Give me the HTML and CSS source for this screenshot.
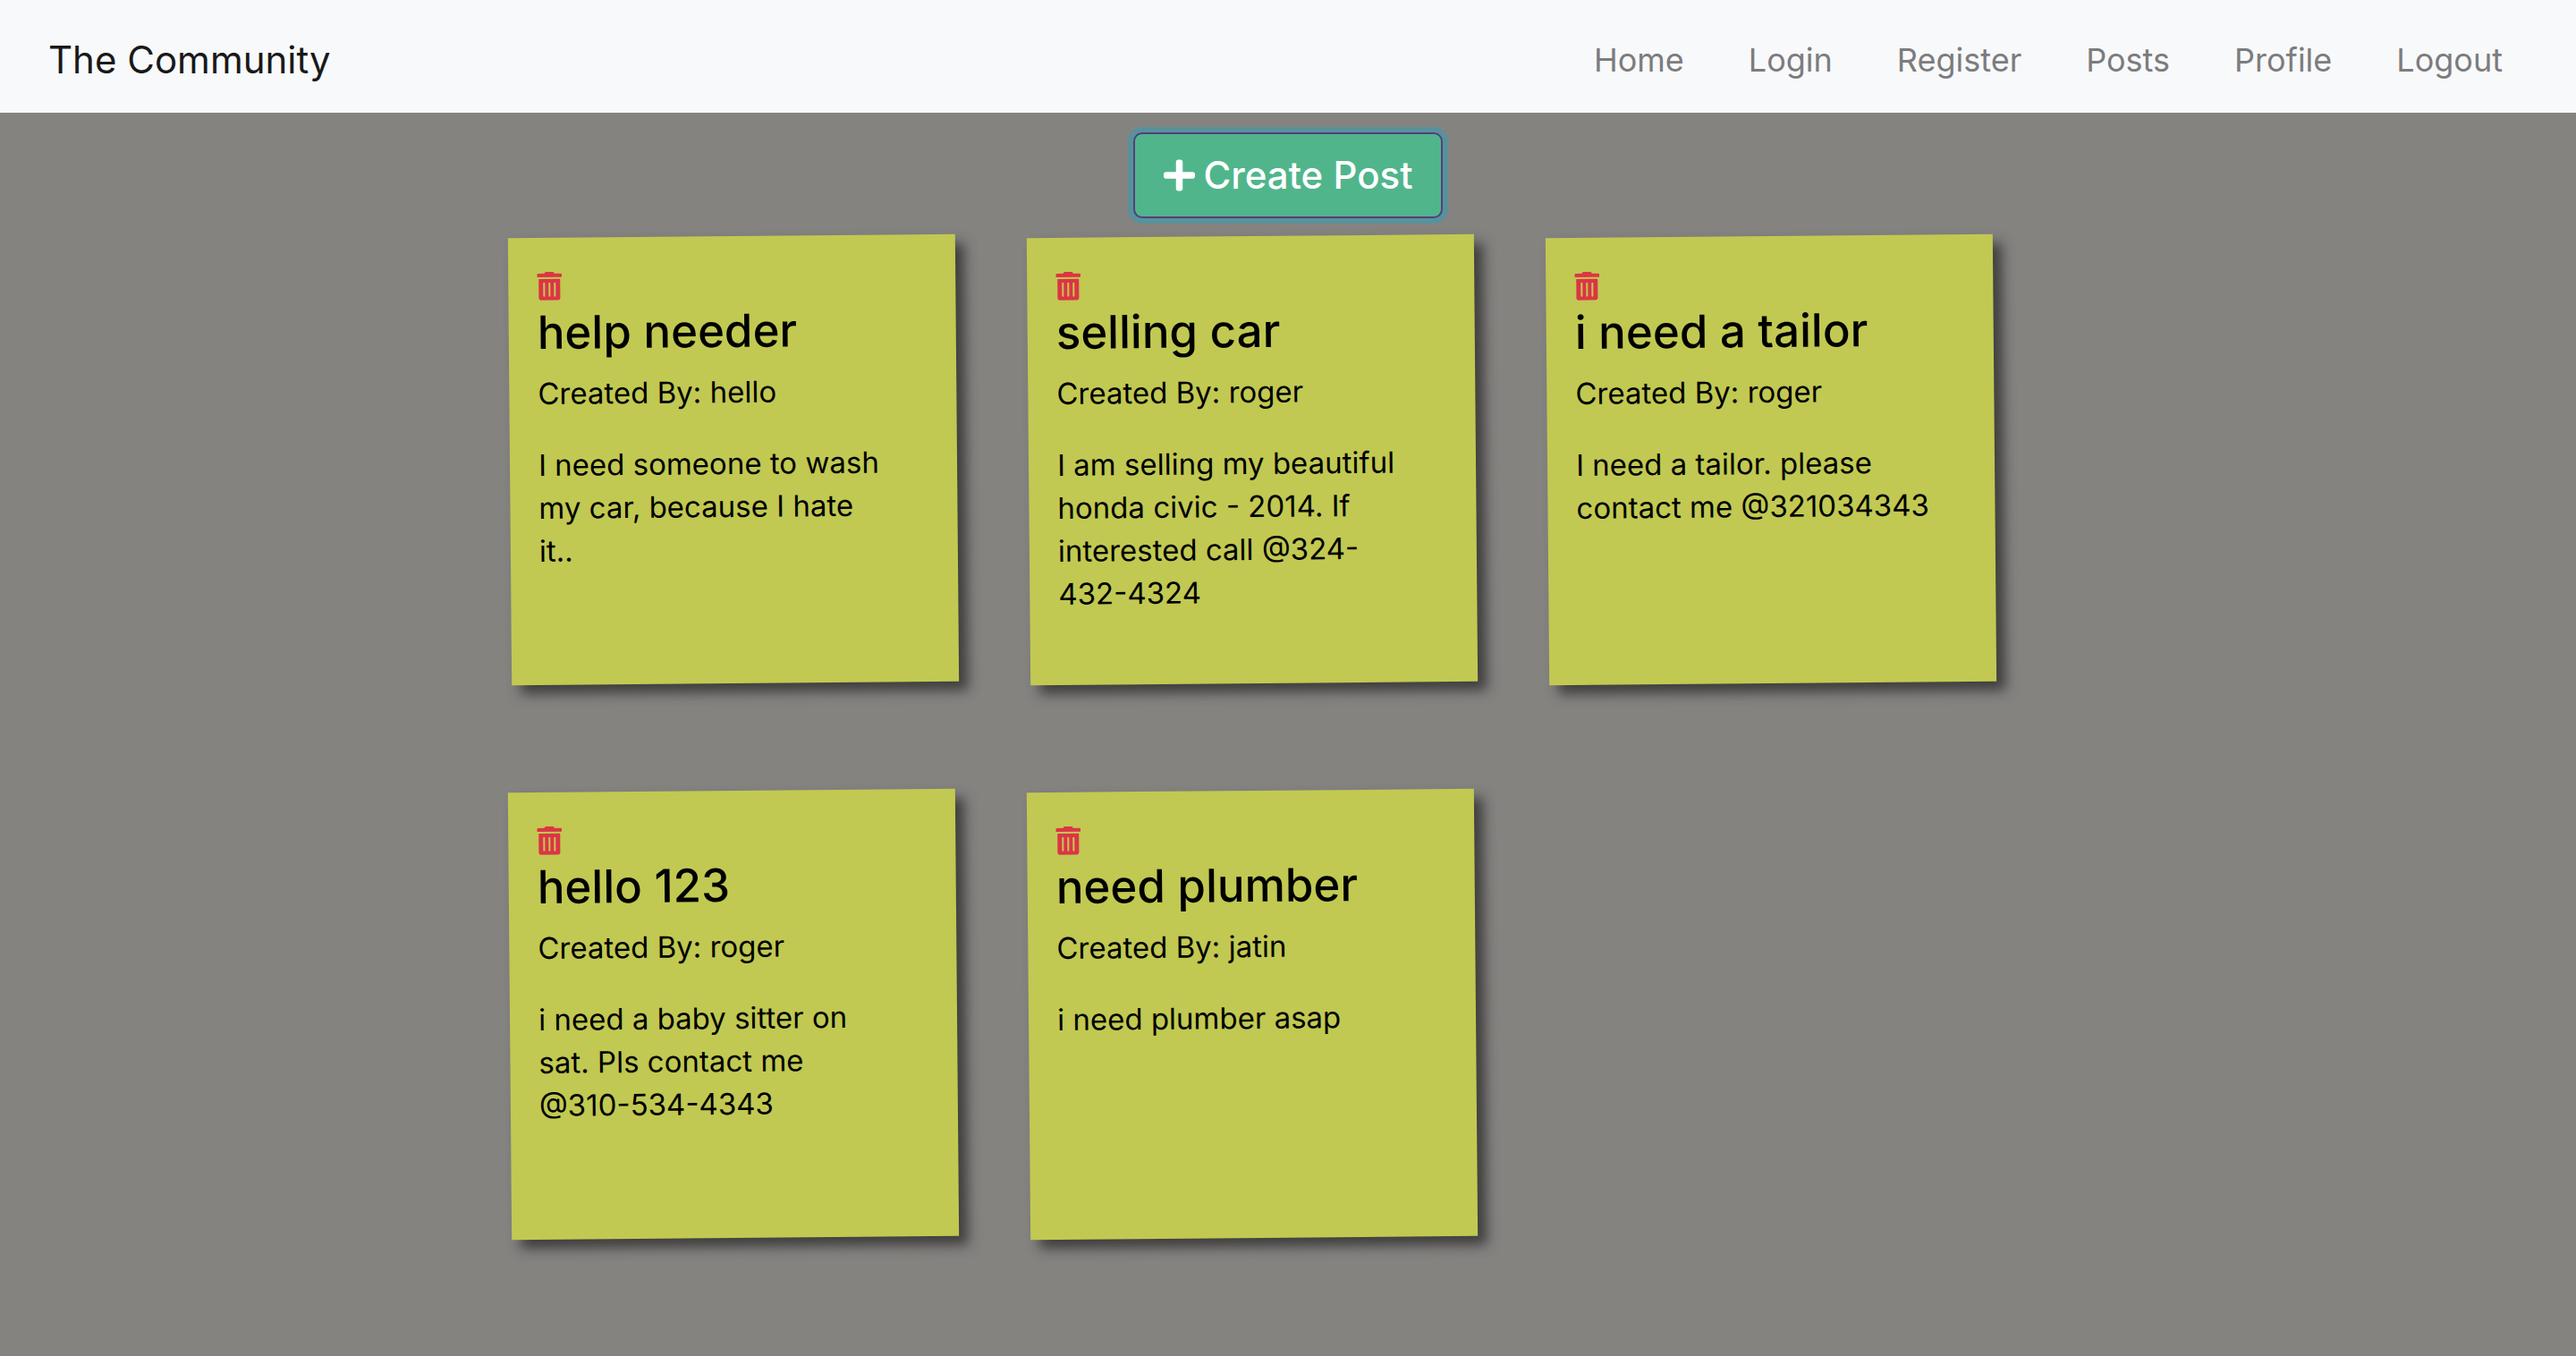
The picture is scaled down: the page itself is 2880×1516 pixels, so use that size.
FILE: index.html
```html
<!DOCTYPE html>
<html lang="en">
<head>
  <meta charset="utf-8">
  <meta name="viewport" content="width=device-width, initial-scale=1">
  <title>The Community</title>
  <link rel="stylesheet" href="styles.css">
</head>
<body>
  <svg class="sprite" aria-hidden="true">
    <symbol id="trash" viewBox="0 0 448 512">
      <path fill-rule="evenodd" d="M0 84V56c0-13.300 10.700-24 24-24h112l9.400-18.700c4-8.200 12.300-13.300 21.400-13.300h114.300c9.100 0 17.400 5.100 21.500 13.300L312 32h112c13.300 0 24 10.700 24 24v28c0 6.600-5.400 12-12 12H12C5.400 96 0 90.600 0 84zM416 140v324c0 26.500-21.500 48-48 48H80c-26.500 0-48-21.500-48-48V140c0-6.600 5.400-12 12-12h360c6.600 0 12 5.400 12 12zM144 208a16 16 0 0 0-32 0v224a16 16 0 0 0 32 0zM240 208a16 16 0 0 0-32 0v224a16 16 0 0 0 32 0zM336 208a16 16 0 0 0-32 0v224a16 16 0 0 0 32 0z"/>
    </symbol>
  </svg>

  <header class="navbar">
    <a class="brand" href="#">The Community</a>
    <nav class="nav-links">
      <a href="#">Home</a>
      <a href="#">Login</a>
      <a href="#">Register</a>
      <a href="#">Posts</a>
      <a href="#">Profile</a>
      <a href="#">Logout</a>
    </nav>
  </header>

  <main>
    <div class="actions">
      <button class="create" type="button">
        <svg class="plus" viewBox="0 0 448 512" aria-hidden="true"><path d="M416 208H272V64c0-17.670-14.330-32-32-32h-32c-17.670 0-32 14.330-32 32v144H32c-17.670 0-32 14.330-32 32v32c0 17.670 14.330 32 32 32h144v144c0 17.670 14.330 32 32 32h32c17.670 0 32-14.330 32-32V304h144c17.670 0 32-14.330 32-32v-32c0-17.670-14.330-32-32-32z"/></svg>
        Create Post
      </button>
    </div>

    <ul class="notes">
      <li class="note">
        <button class="delete" type="button" aria-label="Delete post"><svg class="trash"><use href="#trash"/></svg></button>
        <h2>help needer</h2>
        <p>Created By: hello</p>
        <p>I need someone to wash my car, because I hate it..</p>
      </li>
      <li class="note">
        <button class="delete" type="button" aria-label="Delete post"><svg class="trash"><use href="#trash"/></svg></button>
        <h2>selling car</h2>
        <p>Created By: roger</p>
        <p>I am selling my beautiful honda civic - 2014. If interested call @324-432-4324</p>
      </li>
      <li class="note">
        <button class="delete" type="button" aria-label="Delete post"><svg class="trash"><use href="#trash"/></svg></button>
        <h2>i need a tailor</h2>
        <p>Created By: roger</p>
        <p>I need a tailor. please contact me @321034343</p>
      </li>
      <li class="note">
        <button class="delete" type="button" aria-label="Delete post"><svg class="trash"><use href="#trash"/></svg></button>
        <h2>hello 123</h2>
        <p>Created By: roger</p>
        <p>i need a baby sitter on<br>sat. Pls contact me<br>@310-534-4343</p>
      </li>
      <li class="note">
        <button class="delete" type="button" aria-label="Delete post"><svg class="trash"><use href="#trash"/></svg></button>
        <h2>need plumber</h2>
        <p>Created By: jatin</p>
        <p>i need plumber asap</p>
      </li>
    </ul>
  </main>
</body>
</html>
```
FILE: styles.css
```css
* {
  box-sizing: border-box;
}

body {
  margin: 0;
  background: #858380;
  color: #000;
  font-family: Inter, "Open Sans", sans-serif;
  font-size: 33px;
  line-height: 48px;
}

button {
  font-family: inherit;
  cursor: pointer;
}

.sprite {
  display: none;
}

.navbar {
  display: flex;
  align-items: center;
  justify-content: space-between;
  min-height: 126px;
  padding: 20px 82px 12px 54px;
  background: #f8f9fb;
}

.navbar a {
  text-decoration: none;
}

.brand {
  color: #191919;
  font-size: 42px;
  line-height: 60px;
}

.nav-links {
  display: flex;
  flex-wrap: wrap;
  gap: 72px;
  font-size: 36px;
}

.nav-links a {
  color: #7c7c7d;
}

.actions {
  display: flex;
  justify-content: center;
  padding: 22px 0 20px;
}

.create {
  display: flex;
  align-items: center;
  gap: 10px;
  padding: 16px 32px;
  border: 2px solid #563d7c;
  border-radius: 10px;
  background: #51b58c;
  box-shadow: 0 0 0 6px rgba(41, 162, 184, 0.5);
  color: #fff;
  font-size: 42px;
  font-weight: 500;
  line-height: 60px;
}

.plus {
  width: 35px;
  height: 40px;
  fill: currentColor;
}

.notes {
  display: flex;
  flex-wrap: wrap;
  max-width: 1740px;
  margin: 0 auto;
  padding: 0;
  list-style: none;
}

.note {
  width: 500px;
  min-height: 500px;
  margin: 0 80px 120px 0;
  padding: 32px 72px 32px 32px;
  background: #c1c952;
  box-shadow: 10px 10px 14px rgba(33, 33, 33, 0.7);
  transform: rotate(-0.5deg);
}

.delete {
  display: block;
  padding: 6px 0 8px;
  border: 0;
  background: none;
}

.trash {
  display: block;
  width: 28px;
  height: 32px;
  fill: #dc3545;
}

.note h2 {
  margin: 0 0 16px;
  font-size: 51px;
  font-weight: 500;
  line-height: 56px;
}

.note p {
  margin: 0 0 32px;
}
```
